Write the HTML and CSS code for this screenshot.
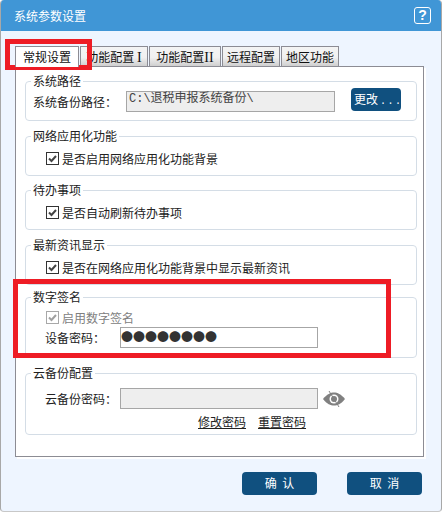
FILE: index.html
```html
<!DOCTYPE html>
<html lang="zh-CN">
<head>
    <meta charset="UTF-8">
    <title>系统参数设置</title>
    <link rel="stylesheet" href="styles.css">
</head>
<body>
    <div class="window">
        <div class="titlebar">
            <span>系统参数设置</span>
            <span class="help-btn">?</span>
        </div>

        <div class="tabs">
            <div class="tab tab-active tab-w1">常规设置</div>
            <div class="tab tab-w2">功能配置 <i>I</i></div>
            <div class="tab tab-w3">功能配置<i>II</i></div>
            <div class="tab tab-w4">远程配置</div>
            <div class="tab tab-w4">地区功能</div>
        </div>

        <div class="panel">
            <!-- 系统路径 -->
            <fieldset class="group">
                <legend>系统路径</legend>
                <div class="row-path">
                    <label class="path-label">系统备份路径：</label>
                    <div class="field field-path field-off">C:\退税申报系统备份\</div>
                    <div class="btn btn-change">更改<span class="dots">...</span></div>
                </div>
            </fieldset>

            <fieldset class="group">
                <legend>网络应用化功能</legend>
                <div class="check-row">
                    <span class="check"><svg viewBox="0 0 11 11"><path d="M2 5.500 4.500 8 9 3" /></svg></span>
                    是否启用网络应用化功能背景
                </div>
            </fieldset>

            <fieldset class="group group-tight">
                <legend>待办事项</legend>
                <div class="check-row">
                    <span class="check"><svg viewBox="0 0 11 11"><path d="M2 5.500 4.500 8 9 3" /></svg></span>
                    是否自动刷新待办事项
                </div>
            </fieldset>

            <fieldset class="group">
                <legend>最新资讯显示</legend>
                <div class="check-row">
                    <span class="check"><svg viewBox="0 0 11 11"><path d="M2 5.500 4.500 8 9 3" /></svg></span>
                    是否在网络应用化功能背景中显示最新资讯
                </div>
            </fieldset>

            <!-- 数字签名 -->
            <fieldset class="group group-sign">
                <legend>数字签名</legend>
                <div class="check-row check-row-off">
                    <span class="check check-off"><svg viewBox="0 0 11 11"><path d="M2 5.500 4.500 8 9 3" /></svg></span>
                    启用数字签名
                </div>
                <div class="form-row">
                    <label class="form-label">设备密码：</label>
                    <div class="field field-pass">●●●●●●●●</div>
                </div>
            </fieldset>

            <!-- 云备份 -->
            <fieldset class="group group-cloud">
                <legend>云备份配置</legend>
                <div class="form-row form-row-cloud">
                    <label class="form-label">云备份密码：</label>
                    <div class="field field-pass field-off"></div>
                    <svg class="eye" viewBox="0 0 22 16">
                        <path d="M0 8C4 3 7.500 1.500 11 1.500S18 3 22 8C18 13 14.500 14.500 11 14.500S4 13 0 8Z" fill="#808080" />
                        <circle cx="11" cy="8" r="4.500" fill="#fff" />
                        <circle cx="11" cy="8" r="3" fill="#808080" />
                        <path d="M6 0 16 16" stroke="#808080" stroke-width="1" />
                    </svg>
                </div>
                <div class="links">
                    <a>修改密码</a>
                    <a>重置密码</a>
                </div>
            </fieldset>
        </div>

        <div class="footer">
            <div class="btn btn-footer">确 认</div>
            <div class="btn btn-footer">取 消</div>
        </div>
    </div>

    <!-- red annotation boxes over the screenshot -->
    <div class="mark mark-tab"></div>
    <div class="mark mark-sign"></div>
</body>
</html>
```

FILE: styles.css
```css
html, body {
    margin: 0;
    padding: 0;
    background: #fff;
}
body {
    width: 443px;
    height: 512px;
    overflow: hidden;
    position: relative;
    font-family: "Noto Sans CJK SC", "Liberation Sans", sans-serif;
    font-size: 12px;
    color: #222;
}
.window {
    width: 442px;
    height: 512px;
    box-sizing: border-box;
    background: #eef5ff;
    border-left: 1px solid #a8a8a8;
    border-right: 1px solid #a8a8a8;
    border-bottom: 1px solid #c8c8c8;
    border-radius: 4px;
    overflow: hidden;
}
.titlebar {
    height: 31px;
    background: #4096d6;
    color: #fff;
    display: flex;
    align-items: center;
    justify-content: space-between;
    padding: 0 10px 1px 13px;
    box-sizing: border-box;
}
.help-btn {
    width: 15px;
    height: 15px;
    border: 1.500px solid #fff;
    border-radius: 3px;
    font: bold 14px/15px "Liberation Sans", sans-serif;
    text-align: center;
}
.tabs {
    display: flex;
    gap: 1px;
    margin: 15px 0 0 14px;
    height: 20px;
}
.tab {
    box-sizing: border-box;
    height: 20px;
    border: 1px solid #8c8c94;
    border-bottom: none;
    background: linear-gradient(#f4f4f4 0, #f0f0f0 55%, #cfcfcf 100%);
    text-align: center;
    line-height: 19px;
    color: #111;
}
.tab i {
    font-family: "Liberation Serif", serif;
    font-size: 14px;
    font-style: normal;
}
.tab-active {
    background: #fff;
    height: 21px;
    position: relative;
    z-index: 1;
}
.tab-w1 { width: 64px; }
.tab-w2 { width: 68px; }
.tab-w3 { width: 72px; }
.tab-w4 { width: 58px; }
.panel {
    width: 409px;
    height: 391px;
    box-sizing: border-box;
    margin-left: 14px;
    background: #fff;
    border: 1px solid #8c8c94;
    box-shadow: 2px 2px 0 #fff;
    padding: 7px 6px 0 9px;
}
.group {
    box-sizing: border-box;
    height: 47px;
    margin: 0 0 8px;
    padding: 0;
    min-width: 0;
    border: 1px solid #d4dde6;
    border-radius: 4px;
}
.group legend {
    margin-left: 5px;
    padding: 0 2px;
    line-height: 14px;
}
.group-tight {
    margin-top: -1px;
}
.group-sign {
    height: 68px;
    margin-top: -3px;
}
.group-cloud {
    height: 69px;
}
.row-path {
    display: flex;
    align-items: flex-start;
    margin-left: 7px;
}
.path-label {
    width: 93px;
    margin-top: 6px;
    line-height: 16px;
}
.field {
    box-sizing: border-box;
    height: 21px;
    border: 1px solid #a6a6a6;
    background: #fff;
}
.field-off {
    background: #eeeeee;
}
.field-path {
    width: 209px;
    margin-top: 3px;
    padding-left: 2px;
    font-family: "Liberation Mono", "Noto Sans CJK SC", monospace;
    line-height: 15px;
    color: #444;
}
.field-pass {
    width: 198px;
    line-height: 18px;
    color: #333;
}
.btn {
    background: #10507f;
    color: #fff;
    border-radius: 4px;
    text-align: center;
}
.btn-change {
    box-sizing: border-box;
    width: 50px;
    height: 23px;
    line-height: 22px;
    margin-left: 16px;
    padding-left: 3px;
    text-align: left;
    white-space: nowrap;
}
.dots {
    margin-left: 2px;
    letter-spacing: 1.500px;
    font-family: "Liberation Mono", monospace;
    font-size: 10px;
}
.check-row {
    display: flex;
    align-items: center;
    gap: 3px;
    height: 16px;
    margin: 7px 0 0 20px;
}
.check-row-off {
    color: #808080;
    margin-top: 5px;
}
.check {
    box-sizing: border-box;
    width: 13px;
    height: 13px;
    border: 1px solid #333;
    background: #fff;
    display: block;
}
.check svg {
    display: block;
    width: 11px;
    height: 11px;
}
.check svg path {
    fill: none;
    stroke: #444;
    stroke-width: 2;
}
.check-off {
    border-color: #a8a8a8;
}
.check-off svg path {
    stroke: #a0a0a0;
}
.form-row {
    display: flex;
    align-items: center;
    margin: 2px 0 0 19px;
}
.form-row-cloud {
    margin-top: 8px;
}
.form-label {
    width: 75px;
}
.eye {
    width: 22px;
    height: 16px;
    margin-left: 5px;
}
.links {
    display: flex;
    gap: 12px;
    margin: 5px 0 0 172px;
}
.links a {
    text-decoration: underline;
    line-height: 16px;
}
.footer {
    display: flex;
    justify-content: flex-end;
    gap: 30px;
    margin-top: 15px;
    padding-right: 19px;
}
.btn-footer {
    width: 75px;
    height: 23px;
    line-height: 22px;
    word-spacing: 3px;
}
.mark {
    position: absolute;
    box-sizing: border-box;
    border: 5px solid #ee1c25;
}
.mark-tab {
    left: 5px;
    top: 39px;
    width: 87px;
    height: 31px;
}
.mark-sign {
    left: 13px;
    top: 279px;
    width: 378px;
    height: 79px;
}
```
